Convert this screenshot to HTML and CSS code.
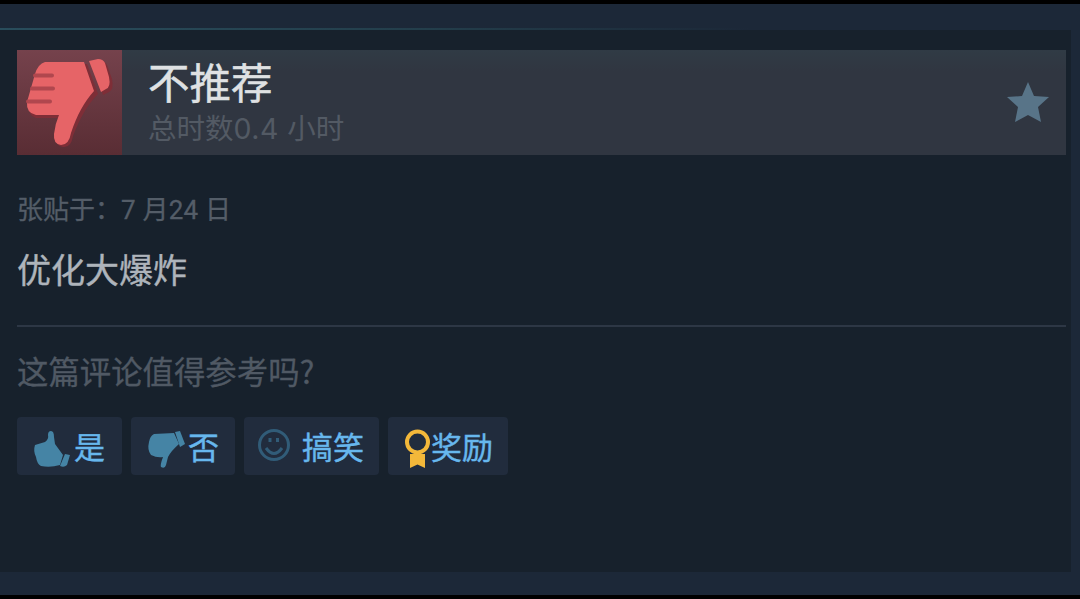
FILE: index.html
```html
<!DOCTYPE html>
<html lang="zh-CN">
<head>
    <meta charset="UTF-8">
    <meta name="viewport" content="width=device-width, initial-scale=1.0">
    <title>评测</title>
    <link rel="stylesheet" href="styles.css">
</head>
<body>

<div class="page">
    <div class="review">
        <div class="review-header">
            <div class="thumb">
                <svg width="105" height="105" viewBox="0 0 105 105">
                    <g class="thumb-shadow" transform="translate(2 2)">
                        <path d="M27 12H68L79 42C68 53 61 66 54 84Q52 96 44 95Q36 94 37 84Q38 74 42 66H17Q9 64 10 52L18 25Q21 14 27 12Z"/>
                        <path d="M74 11L82 9Q86 9 88 13L93 27Q95 38 90 40L84 43Z"/>
                    </g>
                    <g class="thumb-hand">
                        <path d="M28 12H67L77 41C67 52 60 65 54 83Q52 95 44 95Q36 94 37 84Q38 74 42 65H19Q9 63 10 52L18 24Q21 14 28 12Z"/>
                        <path d="M72 11L81 9Q86 9 88 13L92 27Q94 37 89 39L84 42Z"/>
                    </g>
                    <path class="thumb-fingers" d="M18 25.500H35M15 38.500H36M11 51.500H33"/>
                </svg>
            </div>
            <div class="review-title">
                <div class="title">不推荐</div>
                <div class="hours">总时数<span class="num">0.4</span> 小时</div>
            </div>
            <svg class="star" width="44" height="42" viewBox="0 0 44 42">
                <path d="M22 1L28 15L43 16L32 26L35 41L22 34L9 41L12 26L1 16L16 15Z"/>
            </svg>
        </div>

        <div class="posted">张贴于：<span class="date">7 月24 日</span></div>
        <div class="content">优化大爆炸</div>

        <div class="question">这篇评论值得参考吗?</div>
        <div class="buttons">
            <a class="btn btn-yes">
                <svg width="38" height="38" viewBox="0 0 38 38">
                    <path d="M2 14L12 11Q16 8 15 4Q15 0 18 0Q21 0 21 6L22 13L30 24L27 34Q17 37 8 35Q4 33 3 26Q0 20 2 14Z"/>
                    <path d="M32 23L37 24L34 34Q31 37 27 35Z"/>
                </svg>
                <span>是</span>
            </a>
            <a class="btn btn-no">
                <svg width="38" height="38" viewBox="0 0 38 38">
                    <path d="M7 3L27 2L32 13Q24 20 21 26L19 34Q18 38 14 36Q13 34 16 26Q10 27 4 24Q0 19 2 11Q3 5 7 3Z"/>
                    <path d="M28 1L33 0L38 13L33 16Z"/>
                </svg>
                <span>否</span>
            </a>
            <a class="btn btn-funny">
                <svg width="34" height="34" viewBox="0 0 34 34">
                    <circle cx="17" cy="17" r="14.500"/>
                    <path d="M9 20Q17 31 25 20"/>
                    <path class="eyes" d="M13 10V14M20.500 10V14"/>
                </svg>
                <span>搞笑</span>
            </a>
            <a class="btn btn-award">
                <svg width="27" height="40" viewBox="0 0 27 40">
                    <path d="M6 25H21V39L13.500 35.500L6 39Z"/>
                    <circle cx="13.500" cy="13" r="10.500"/>
                </svg>
                <span>奖励</span>
            </a>
        </div>
    </div>
</div>

</body>
</html>
```
FILE: styles.css
```css
* {
    box-sizing: border-box;
}

body {
    margin: 0;
    background-color: #000;
    font-family: "Noto Sans CJK SC", sans-serif;
}

.page {
    height: 599px;
    padding: 24px 9px 23px 0;
    background-color: #1c2838;
    border-top: 4px solid #000;
    border-bottom: 4px solid #000;
}

.review {
    height: 544px;
    padding: 20px 5px 0 17px;
    /* top line fades out to the right */
    background: linear-gradient(to right, #294d5c, #233e4b 40%, #1c2838 70%) no-repeat 0 0 / 100% 2px, #17212c;
}

.review-header {
    display: flex;
    align-items: center;
    height: 105px;
    margin-top: 2px;
    background: linear-gradient(#303b45, #303641 20%);
}

.thumb {
    width: 105px;
    height: 105px;
    background: linear-gradient(#75424c, #592d34);
}

.thumb svg {
    display: block;
}

.thumb-hand {
    fill: #e66467;
}

.thumb-shadow {
    fill: #7e2e37;
}

.thumb-fingers {
    fill: none;
    stroke: #b0474e;
    stroke-width: 4;
    stroke-linecap: round;
}

.review-title {
    flex: 1;
    height: 105px;
    padding: 4px 0 0 26px;
}

.title {
    color: #dfe1e3;
    font-size: 41.5px;
    line-height: 54px;
    -webkit-text-stroke: 0.5px #dfe1e3;
}

.hours {
    color: #535a64;
    font-size: 28.5px;
    line-height: 38px;
}

.num {
    margin-right: 2px;
    font-family: Inter, sans-serif;
    letter-spacing: 0.5px;
}

.star {
    margin: 0 16px 2px 0;
    fill: #587488;
}

.posted {
    margin-top: 35px;
    color: #545d68;
    font-size: 26px;
    line-height: 36px;
    -webkit-text-stroke: 0.3px #545d68;
}

.date {
    font-family: Roboto, "Noto Sans CJK SC", sans-serif;
    letter-spacing: 0.2px;
}

.content {
    height: 99px;
    padding-top: 17px;
    border-bottom: 2px solid #2d3745;
    color: #aeb4bb;
    font-size: 34px;
    line-height: 48px;
    -webkit-text-stroke: 0.4px #aeb4bb;
}

.question {
    margin-top: 22px;
    color: #505964;
    font-size: 31.4px;
    line-height: 44px;
    -webkit-text-stroke: 0.3px #505964;
}

.buttons {
    display: flex;
    gap: 9px;
    margin-top: 24px;
}

.btn {
    display: flex;
    align-items: center;
    height: 58px;
    border-radius: 4px;
    background-color: #212c3d;
    color: #67b7ed;
    font-size: 31px;
    line-height: 58px;
    -webkit-text-stroke: 0.4px #67b7ed;
}

.btn svg {
    flex: none;
    fill: #4584a5;
}

.btn-yes {
    width: 105px;
    padding-left: 16px;
}

.btn-yes svg {
    margin: 8px 3px 0 0;
}

.btn-no {
    width: 104px;
    padding-left: 16px;
}

.btn-no svg {
    margin: 7px 3px 0 0;
}

.btn-funny {
    width: 135px;
    padding-left: 13px;
}

.btn-funny svg {
    margin: 0 11px 2px 0;
    fill: none;
    stroke: #315c78;
    stroke-width: 3;
}

.btn-award {
    width: 120px;
    padding-left: 16px;
}

.btn-award svg {
    margin-top: 5px;
    fill: #f3b83a;
}

.btn-award circle {
    fill: #212c3d;
    stroke: #f3b83a;
    stroke-width: 4;
}
```
